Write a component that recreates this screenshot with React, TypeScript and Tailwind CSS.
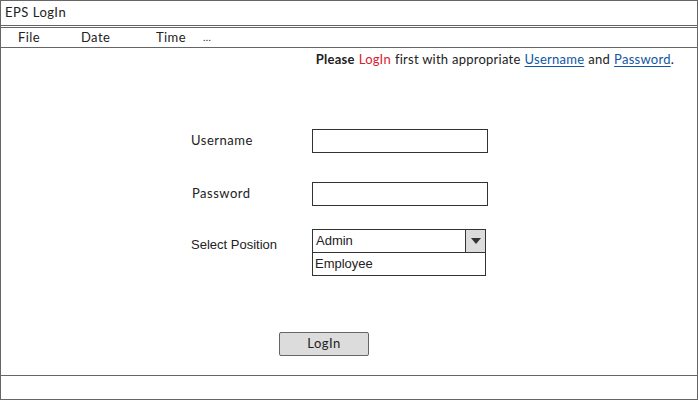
import React from "react";

const bal = { fontFamily: "Lato, 'Open Sans', sans-serif" };
const arial = { fontFamily: "'Liberation Sans', Arial, sans-serif" };

export default function App() {
  return (
    <div className="w-[698px] h-[400px] bg-white border border-[#666] flex flex-col text-[#222]" style={bal}>
      {/* title bar */}
      <div className="h-[25px] border-b border-[#666] flex items-center pl-[4px] text-[13px] tracking-[0.5px]">EPS LogIn</div>
      <div className="h-[1px]" />
      {/* menu */}
      <div className="h-[21px] border-y border-[#666] flex items-center pl-[17px] text-[13px] tracking-[0.4px]">
        <span className="w-[63px]">File</span>
        <span className="w-[75px]">Date</span>
        <span className="w-[47px]">Time</span>
        <span className="text-[10px]">...</span>
      </div>
      {/* content */}
      <div className="flex-1 border-b border-[#666] flex flex-col">
        <div className="h-[24px] flex items-center justify-end pr-[23px] text-[13px] tracking-[0.25px]">
          <span className="font-bold">Please</span>
          <span className="text-[#d8222c] ml-[4px]">LogIn</span>
          <span className="ml-[4px]">first with appropriate</span>
          <span className="ml-[4px] text-[#0f56a3] underline underline-offset-2">Username</span>
          <span className="ml-[4px]">and</span>
          <span className="ml-[4px] text-[#0f56a3] underline underline-offset-2">Password</span>
          <span>.</span>
        </div>
        <div className="mt-[57px] flex items-center ml-[190px]">
          <span className="w-[121px] text-[13px] tracking-[0.5px]">Username</span>
          <div className="w-[176px] h-[24px] border border-[#333] bg-white" />
        </div>
        <div className="mt-[29px] flex items-center ml-[191px]">
          <span className="w-[120px] text-[13px] tracking-[0.5px]">Password</span>
          <div className="w-[176px] h-[24px] border border-[#333] bg-white" />
        </div>
        <div className="mt-[23px] flex items-start ml-[190px]">
          <span className="w-[121px] text-[13px] mt-[6px]" style={arial}>Select Position</span>
          <div className="flex flex-col w-[174px]" style={arial}>
            <div className="h-[24px] border border-[#333] flex">
              <div className="flex-1 flex items-center pl-[3px] text-[13px]">Admin</div>
              <div className="w-[20px] bg-[#dcdcdc] border-l border-[#333] flex items-center justify-center">
                <svg width="10" height="6" viewBox="0 0 10 6"><path d="M0 0 H10 L5 6 Z" fill="#333" /></svg>
              </div>
            </div>
            <div className="h-[23px] border border-t-0 border-[#333] flex items-center pl-[2px] text-[13px]">Employee</div>
          </div>
        </div>
        <div className="mt-[56px] ml-[278px]">
          <div className="w-[90px] h-[24px] bg-[#dcdcdc] border border-[#666] rounded-[2px] flex items-center justify-center text-[13px] tracking-[0.5px]">LogIn</div>
        </div>
      </div>
      <div className="h-[23px]" />
    </div>
  );
}
